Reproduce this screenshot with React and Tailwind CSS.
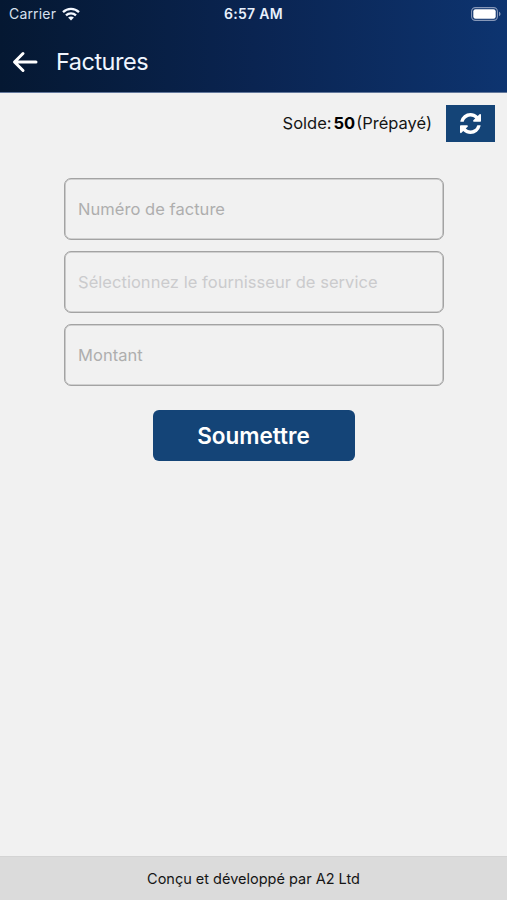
function WifiIcon() {
  return (
    <svg className="ml-[6px] h-[14px] w-[18px]" viewBox="0 0 18 14" fill="none" stroke="#f4f8ff" strokeWidth="2.3">
      <path d="M1 5.1C5.5 .7 12.500 .7 17 5.100" />
      <path d="M4 8.300C6.800 5.600 11.200 5.600 14 8.300" />
      <path d="M9 13.600L6.100 10.600C7.700 9.100 10.300 9.100 11.900 10.600Z" fill="#f4f8ff" stroke="none" />
    </svg>
  );
}

function BatteryIcon() {
  return (
    <svg className="h-[14px] w-[30px]" viewBox="0 0 30 14" fill="none">
      <rect x="0.600" y="0.600" width="25.800" height="12.800" rx="3.800" stroke="#8798b8" strokeWidth="1.100" />
      <rect x="2.300" y="2.300" width="22.400" height="9.400" rx="2.200" fill="#fff" />
      <path d="M28 4.800C30 5.500 30 8.500 28 9.200Z" fill="#8798b8" />
    </svg>
  );
}

function BackIcon() {
  return (
    <svg className="h-[22px] w-[26px]" viewBox="0 0 26 22" fill="none" stroke="#fff" strokeWidth="3" strokeLinecap="round" strokeLinejoin="round">
      <path d="M11 2.500L2.500 11L11 19.500M3 11H24" />
    </svg>
  );
}

function RefreshIcon() {
  return (
    <svg className="h-[21px] w-[21px]" viewBox="0 0 1536 1536" fill="#fff">
      <path d="M1511 928q0 5-1 7-64 268-268 434.500T764 1536q-146 0-282.500-55T238 1324l-129 129q-19 19-45 19t-45-19-19-45V960q0-26 19-45t45-19h448q26 0 45 19t19 45-19 45l-137 137q71 66 161 102t187 36q134 0 250-65t186-179q11-17 53-117 8-23 30-23h192q13 0 22.500 9.500t9.500 22.500zm25-800v448q0 26-19 45t-45 19h-448q-26 0-45-19t-19-45 19-45l138-138Q969 256 768 256q-134 0-250 65T332 500q-11 17-53 117-8 23-30 23H50q-13 0-22.500-9.500T18 608v-7q65-268 270-434.500T768 0q146 0 284 55.500T1297 212l130-129q19-19 45-19t45 19 19 45z" />
    </svg>
  );
}

function Field({ label, muted }) {
  return (
    <div className="flex h-[62px] items-center rounded-[7px] border border-[#a3a3a3] pl-[13px] inset-shadow-[0_0_0_0.6px_#b0b0b0]">
      <span className={muted ? "text-[16.5px] tracking-[0.04px] text-[#cbcbcd]" : "text-[16.5px] tracking-[0.04px] text-[#aeaeae]"}>{label}</span>
    </div>
  );
}

export default function App() {
  return (
    <div className="flex h-[900px] w-[507px] flex-col overflow-hidden bg-[#f1f1f1] font-['Inter','Liberation_Sans',sans-serif] whitespace-nowrap">
      <header className="h-[93px] shrink-0 border-b border-[#63789c] bg-linear-to-r from-[#051832] via-[#0a2451] to-[#0d3470] text-white">
        <div className="grid h-[27px] grid-cols-3 items-center pl-[9px] pr-[6px]">
          <div className="flex items-center">
            <span className="text-[14px] tracking-[0.18px] text-[#d7e0ee]">Carrier</span>
            <WifiIcon />
          </div>
          <span className="-ml-[3px] text-center text-[14px] font-semibold tracking-[0.3px] text-[#e8f0fc]">6:57 AM</span>
          <div className="flex justify-end"><BatteryIcon /></div>
        </div>
        <div className="flex h-[70px] items-center pl-[12px]">
          <BackIcon />
          <h1 className="ml-[18px] text-[23.5px] tracking-[-0.5px] text-[#f0f6ff]">Factures</h1>
        </div>
      </header>
      <main className="flex-1">
        <div className="mt-[12px] flex h-[37px] items-center justify-end pr-[12px] text-[16.5px] text-[#151515]">
          <span>Solde:</span>
          <span className="ml-[2px] font-bold text-black">50</span>
          <span className="ml-px">(Prépayé)</span>
          <button className="ml-[14px] flex h-[37px] w-[49px] items-center justify-center bg-[#144477]"><RefreshIcon /></button>
        </div>
        <div className="mt-[36px] flex flex-col gap-[11px] pl-[64px] pr-[63px]">
          <Field label="Numéro de facture" />
          <Field label="Sélectionnez le fournisseur de service" muted />
          <Field label="Montant" />
        </div>
        <button className="mx-auto mt-[24px] flex h-[51px] w-[202px] items-center justify-center rounded-[6px] bg-[#144477] pt-px text-[22.5px] font-semibold text-white">Soumettre</button>
      </main>
      <footer className="flex h-[44px] shrink-0 items-center justify-center border-t border-[#d4d4d4] bg-[#dbdbdb] text-[14.5px] text-[#151515]">Conçu et développé par A2 Ltd</footer>
    </div>
  );
}
